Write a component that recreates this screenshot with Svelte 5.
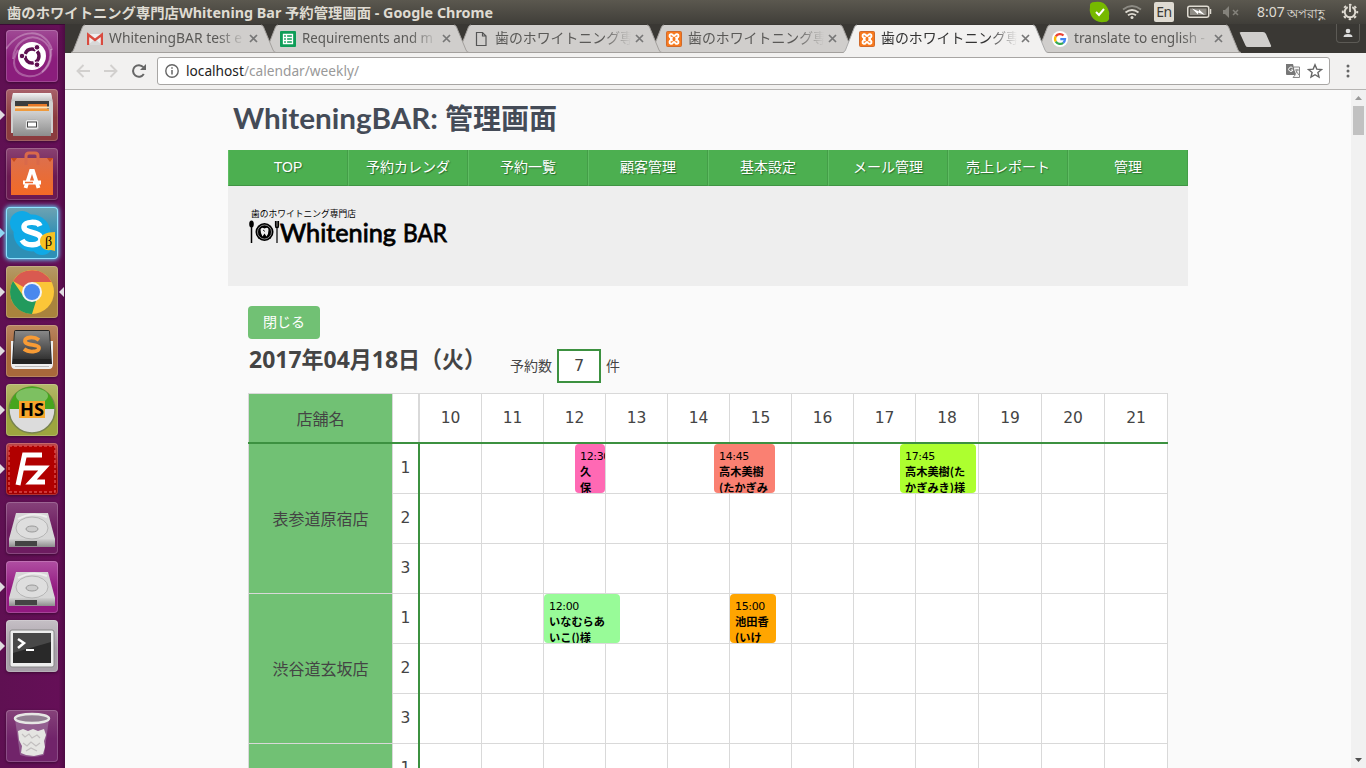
<script>
  const tabs = [
    { icon: 'gmail', title: 'WhiteningBAR test e', len: 133 },
    { icon: 'sheet', title: 'Requirements and m', len: 131 },
    { icon: 'file', title: '歯のホワイトニング専', len: 139 },
    { icon: 'xampp', title: '歯のホワイトニング専', len: 139 },
    { icon: 'xampp', title: '歯のホワイトニング専', len: 139, active: true },
    { icon: 'google', title: 'translate to english -', len: 131 }
  ];
  const launcher = [
    { icon: 'ubuntu', a: '#a04a95', b: '#8b1d7c' },
    { icon: 'files', a: '#a8616a', b: '#8b3b3e', run: true },
    { icon: 'software', a: '#8a4272', b: '#6b1a52' },
    { icon: 'skype', a: '#6fa3b2', b: '#2e8fb5', run: true, glow: true },
    { icon: 'chrome', a: '#b59a67', b: '#a9833d', run: true, focus: true },
    { icon: 'sublime', a: '#b98560', b: '#a8683b', run: true },
    { icon: 'heidi', a: '#b5b86a', b: '#9da53f', run: true },
    { icon: 'filezilla', a: '#b9474a', b: '#a00000', run: true },
    { icon: 'disk', a: '#86427a', b: '#6d1c60' },
    { icon: 'disk', a: '#b04fa2', b: '#921980', run: true },
    { icon: 'terminal', a: '#c5bfc5', b: '#a79fa8', run: true },
    { icon: 'trash', a: '#86427a', b: '#71246a', last: true }
  ];
  const nav = ['TOP', '予約カレンダ', '予約一覧', '顧客管理', '基本設定', 'メール管理', '売上レポート', '管理'];
  const hours = [10, 11, 12, 13, 14, 15, 16, 17, 18, 19, 20, 21];
  const stores = [
    {
      name: '表参道原宿店',
      events: [
        { left: 326, width: 30, color: '#ff69b4', time: '12:30', lines: ['久', '保'] },
        { left: 465, width: 61, color: '#fa8072', time: '14:45', lines: ['高木美樹', '(たかぎみ'] },
        { left: 651, width: 76, color: '#adff2f', time: '17:45', lines: ['高木美樹(た', 'かぎみき)様'] }
      ]
    },
    {
      name: '渋谷道玄坂店',
      events: [
        { left: 295, width: 76, color: '#98fb98', time: '12:00', lines: ['いなむらあ', 'いこ()様'] },
        { left: 481, width: 46, color: '#ffa500', time: '15:00', lines: ['池田香', '(いけ'] }
      ]
    },
    { name: '', events: [] }
  ];
</script>

{#snippet favicon(name)}
  <svg class="favicon" width="16" height="16" viewBox="0 0 16 16">
    {#if name === 'gmail'}
      <path d="M1 3h14v11H1z" fill="#eee" />
      <path d="M1 14h14L8 8z" fill="#d8d8d8" />
      <path d="M1 14V3.500L8 9l7-5.500V14" fill="none" stroke="#d94b3f" stroke-width="2.400" />
    {:else if name === 'sheet'}
      <rect width="16" height="16" rx="1" fill="#0f9d58" />
      <path d="M3.500 3.500h9v9h-9zM3.500 6.500h9M3.500 9.500h9M6.500 3.500v9" fill="none" stroke="#fff" stroke-width="1.300" />
    {:else if name === 'file'}
      <path d="M3.500 1.500h6l3.500 3.500v9.500H3.500zM9.500 1.500V5H13" fill="none" stroke="#555" stroke-width="1.200" />
    {:else if name === 'xampp'}
      <rect x=".5" y=".5" width="15" height="15" rx="1" fill="#f8791d" stroke="#cf6a2c" />
      <g fill="none" stroke="#fff" stroke-width="1.900">
        <path d="M6.800 6.800H5.200a1.800 1.800 0 1 1 1.700-2.600l1.100.9 1.100-.9a1.800 1.800 0 1 1 1.700 2.600H9.200" />
        <path d="M6.800 9.200H5.200a1.800 1.800 0 1 0 1.700 2.600l1.100-.9 1.100.9a1.800 1.800 0 1 0 1.700-2.600H9.200" />
        <path d="M5 6.500v3M11 6.500v3" />
      </g>
    {:else}
      <circle cx="8" cy="8" r="8" fill="#fff" />
      <g fill="none" stroke-width="2.300">
        <path d="M3.800 5.400A5 5 0 0 1 11.500 4.500" stroke="#ea4335" />
        <path d="M3.800 5.400a5 5 0 0 0 0 5.200" stroke="#fbbc05" />
        <path d="M3.800 10.600A5 5 0 0 0 11.200 11.800" stroke="#34a853" />
        <path d="M11.200 11.800A5 5 0 0 0 13 8.200H8.300" stroke="#4285f4" />
      </g>
    {/if}
  </svg>
{/snippet}

{#snippet appIcon(name)}
  <svg width="52" height="52" viewBox="0 0 52 52">
    {#if name === 'ubuntu'}
      <g fill="none" stroke="#fff" stroke-opacity=".28" stroke-width="2">
        <path d="M7 29C8 11 24 3 36 10s10 23 0 32" /><path d="M45 19c2 17-10 29-24 27S5 31 12 20" /><path d="M0 19C13-1 39-3 46 20" />
      </g>
      <circle cx="26" cy="26" r="14" fill="#fff" />
      <circle cx="26" cy="26" r="7" fill="none" stroke="#5e0f50" stroke-width="3.400" stroke-dasharray="12.900 1.760" stroke-dashoffset="5.500" />
      <g fill="#5e0f50" stroke="#fff"><circle cx="16" cy="26" r="2.800" /><circle cx="31" cy="17.300" r="2.800" /><circle cx="31" cy="34.700" r="2.800" /></g>
    {:else if name === 'files'}
      <path d="M7 4h38l2 10v30H5V14z" fill="#d0d0d0" /><path d="M7 4h38l1.500 8h-41z" fill="url(#lid)" /><path d="M9 12h34v13H9z" fill="#3c3c3c" />
      <path d="M9 17h13v-2h19v6H9z" fill="#e87a28" /><path d="M9 17.500h34v2H9z" fill="#fbe3b5" /><path d="M9 20h34v3H9z" fill="#ef9a3c" />
      <path d="M7 22h38v25H7z" fill="url(#metal)" />
      <rect x="19.500" y="30.500" width="13" height="10" rx="2" fill="#e8e8e8" stroke="#b5b5b5" /><rect x="21.500" y="33" width="9" height="5" fill="#fff" stroke="#444" />
    {:else if name === 'software'}
      <path d="M5 10h42v37H5z" fill="url(#orange)" /><path d="M5 10l3 4 3-4M41 10l3 4 3-4" fill="#c94b1d" />
      <path d="M20 17V8q0-3 3-3h6q3 0 3 3v9" fill="none" stroke="#d9694a" stroke-width="3" />
      <path d="M19.500 40l5.500-17h2l5.500 17M17 34.500h18" fill="none" stroke="#fff" stroke-width="3.800" /><path d="M19 34.500h8" stroke="#ee6930" stroke-width="1.500" />
    {:else if name === 'skype'}
      <circle cx="26" cy="26" r="18.500" fill="#0fa9e6" /><circle cx="16" cy="16" r="12" fill="#0fa9e6" /><circle cx="36" cy="37" r="11" fill="#0fa9e6" />
      <path d="M34 19c-2-5-16-5-16 1 0 7 17 4 17 12 0 7-15 8-19 1" fill="none" stroke="#fff" stroke-width="5.500" />
      <path d="M49 25v19l-4-1c-7 1-11-3-11-9s6-9 15-9z" fill="#f6c224" />
      <text x="39" y="39" font-family="Liberation Serif, serif" font-size="14">β</text>
    {:else if name === 'chrome'}
      <circle cx="26" cy="26" r="22" fill="#fbc638" />
      <path d="M26 26L7 15A22 22 0 0 1 45.500 16H26z" fill="#d95a50" /><path d="M7 15l11 16 12 4-4 13A22 22 0 0 1 7 15z" fill="#229a5d" />
      <circle cx="26" cy="26" r="10" fill="#f4f4f4" /><circle cx="26" cy="26" r="8" fill="#4a88ee" />
    {:else if name === 'sublime'}
      <path d="M5 16h42v23q0 5-4 5H9q-4 0-4-5z" fill="#eee" /><path d="M9 41.500h34" stroke="#bbb" /><path d="M8 7q0-2 2-2h32q2 0 2 2l2 32H6z" fill="#222" />
      <path d="M9 6h34l2 28H7z" fill="url(#dark)" /><path d="M33 15c-5-4-14-3-14 1 0 5 14 3 14 7 0 4-10 5-15 1" fill="none" stroke="#f79b35" stroke-width="3.800" />
    {:else if name === 'heidi'}
      <circle cx="26" cy="26" r="23" fill="#dcdcdc" stroke="#78834f" stroke-width="1.500" /><path d="M3.500 25a22.500 22.500 0 0 1 45 0z" fill="#46a51e" /><ellipse cx="26" cy="12" rx="16" ry="8" fill="#fff" opacity=".3" />
      <rect x="13" y="17" width="26" height="17" fill="#f6a62b" /><text x="26" y="31.500" text-anchor="middle" font-family="Noto Sans, sans-serif" font-weight="700" font-size="17" textLength="24" lengthAdjust="spacingAndGlyphs">HS</text>
    {:else if name === 'filezilla'}
      <rect x="3" y="3" width="46" height="46" fill="#b10000" stroke="#d94a4a" stroke-width="1.500" stroke-dasharray="3 2" />
      <path d="M12 42l6.500-30H36M16 25h13M26 25h12L25 39h14" fill="none" stroke="#fff" stroke-width="5" />
    {:else if name === 'disk'}
      <path d="M10 11h32l7 26H3z" fill="#d7d7d7" /><path d="M3 37h46v8H3z" fill="url(#metal)" /><path d="M9 39h22v5H9z" fill="#444" />
      <ellipse cx="26" cy="26" rx="16" ry="11" fill="#dedede" stroke="#b5b5b5" /><ellipse cx="26" cy="27" rx="6" ry="3" fill="#ccc" stroke="#999" /><path d="M12 17q14-8 29-2" fill="none" stroke="#eee" stroke-width="2" />
    {:else if name === 'terminal'}
      <rect x="4" y="10" width="44" height="37" rx="2" fill="#eee" stroke="#888" /><rect x="7" y="13" width="38" height="30" fill="#292929" /><path d="M7 13h38v9L7 33z" fill="#484848" />
      <path d="M12 19l6 4-6 5" fill="none" stroke="#fff" stroke-width="2.500" /><path d="M20 30h8" stroke="#fff" stroke-width="2" />
    {:else}
      <path d="M9 9l5 36q12 4 24 0l5-36" fill="#a077a0" opacity=".65" />
      <path d="M12 21l5-2 5 2 5-2 5 2 6-2 2 6-2 6 1 6-2 7-9 2-8-1-5-2 1-7-3-6z" fill="#e5e5e2" /><path d="M16 24l3 3 4-3 3 4 5-3 3 3M17 33l4 3 4-4 5 4 4-3M20 41l5-3 6 3" fill="none" stroke="#c2bfbf" stroke-width="1.200" />
      <ellipse cx="26" cy="8.500" rx="17" ry="4.500" fill="#938093" stroke="#e7e7e5" stroke-width="2.500" />
    {/if}
  </svg>
{/snippet}

<svg class="defs" width="0" height="0">
  <defs>
    <linearGradient id="metal" x2="0" y2="1"><stop stop-color="#d2d2d2" /><stop offset="1" stop-color="#8d8d8d" /></linearGradient>
    <linearGradient id="lid" x2="0" y2="1"><stop stop-color="#f4f4f4" /><stop offset="1" stop-color="#c2c2c2" /></linearGradient>
    <linearGradient id="orange" x2="0" y2="1"><stop stop-color="#dd6f4c" /><stop offset="1" stop-color="#f26a26" /></linearGradient>
    <linearGradient id="dark" x2="0" y2="1"><stop stop-color="#888" /><stop offset="1" stop-color="#333" /></linearGradient>
  </defs>
</svg>

<div class="desktop">
  <header class="panel">
    <svg class="win-title" width="490" height="24">
      <text x="7" y="18" textLength="486" lengthAdjust="spacingAndGlyphs">歯のホワイトニング専門店Whitening Bar 予約管理画面 - Google Chrome</text>
    </svg>
    <div class="tray">
      <svg width="22" height="22" viewBox="0 0 22 22"><path d="M1 6Q0 1 6 1q9-1 12 5 3 5 2 9 1 6-5 6-8 1-12-5Q0 11 1 6z" fill="#76b900" /><path d="M7 11l3 3 5-6" fill="none" stroke="#fff" stroke-width="2" /></svg>
      <svg class="wifi" width="20" height="16" viewBox="0 0 20 16" fill="none" stroke-width="1.800"><path d="M1 5.500q9-7 18 0" stroke="#8d8b84" /><path d="M3.500 8.500q6.500-5 13 0M6 11.300q4-3 8 0" stroke="#dfdbd2" /><circle cx="10" cy="13.500" r="1.500" fill="#dfdbd2" /></svg>
      <span class="lang">En</span>
      <svg class="battery" width="25" height="14" viewBox="0 0 25 14"><rect x=".75" y="1.250" width="21" height="11" rx="2" fill="none" stroke="#dfdbd2" stroke-width="1.500" /><rect x="3" y="3.500" width="16.500" height="6.500" fill="#8f8c85" /><path d="M23.500 4v5" stroke="#dfdbd2" stroke-width="1.500" /><path d="M5 3.500l7 3V4.500l6 5.500-7-2.500v2z" fill="#fff" /></svg>
      <svg class="mute" width="18" height="12" viewBox="0 0 18 12"><path d="M1 4h2l4-4v12L3 8H1z" fill="#84827b" /><path d="M11 4l5 5M16 4l-5 5" stroke="#84827b" stroke-width="1.500" /></svg>
      <div class="clock"><span>8:07</span><span class="ampm">অপরাহ্ণ</span></div>
      <svg class="gear" width="18" height="18" viewBox="0 0 18 18" fill="none" stroke="#dfdbd2"><circle cx="9" cy="9" r="7.200" stroke-width="2" stroke-dasharray="2.500 3.155" stroke-dashoffset="1.250" /><path d="M6.700 4.200a5.300 5.300 0 1 0 4.600 0" stroke-width="2" /><path d="M9 2.500V9" stroke-width="1.800" /></svg>
    </div>
  </header>

  <div class="below">
    <aside class="launcher">
      {#each launcher as app}
        <div class="app" class:run={app.run} class:focus={app.focus} class:glow={app.glow} class:last={app.last} style="--a:{app.a};--b:{app.b}">
          {@render appIcon(app.icon)}
        </div>
      {/each}
    </aside>

    <main class="browser">
      <div class="tabstrip">
        {#each tabs as tab, i}
          <div class="tab" class:active={tab.active} style="z-index:{tab.active ? 20 : 10 - i}">
            <svg class="shape" width="206" height="29" viewBox="0 0 206 29">
              <path class="fill" d="M0 29Q1.500 28.500 2.500 26L11.500 3Q12.500 1 14 1H190Q191.500 1 192.500 3L202 26Q203 28.500 205 29z" />
              <path class="edge" d="M0 28.500Q1.500 28 2.500 26L11.500 3Q12.500 1 14 1M190 1Q191.500 1 192.500 3L202 26Q203 28.500 205 28.500" />
              {#if !tab.active}<path d="M1 28.500h203" stroke="#a3a09d" />{/if}
            </svg>
            <div class="tab-body">
              {@render favicon(tab.icon)}
              <svg class="tab-title" width="140" height="24"><text x="0" y="15.500" textLength={tab.len} lengthAdjust="spacingAndGlyphs">{tab.title}</text></svg>
              <svg class="close" width="9" height="9" viewBox="0 0 9 9"><path d="M1 1l7 7M8 1L1 8" stroke="#777" stroke-width="1.700" /></svg>
            </div>
          </div>
        {/each}
        <svg class="newtab" width="34" height="17" viewBox="0 0 34 17"><path d="M1 1.500Q0 0 2 0H24Q26 0 27 2L32 13.500Q32.500 15 31 15H9Q7 15 6.500 13.500z" fill="#d0cecc" /></svg>
        <div class="user"><svg width="10" height="10" viewBox="0 0 10 10"><circle cx="5" cy="3" r="2.300" fill="#ddd" /><path d="M.5 9q0-3 4.500-3t4.500 3z" fill="#ddd" /></svg></div>
      </div>

      <div class="toolbar">
        <svg width="14" height="14" viewBox="0 0 14 14" fill="none" stroke="#d2d0ce" stroke-width="1.900"><path d="M14 7H2M7.500 1L1.500 7l6 6" /></svg>
        <svg width="14" height="14" viewBox="0 0 14 14" fill="none" stroke="#d2d0ce" stroke-width="1.900"><path d="M0 7h12M6.500 1l6 6-6 6" /></svg>
        <svg width="14" height="14" viewBox="0 0 14 14"><path d="M11.800 10A5.800 5.800 0 1 1 11.300 3.200" fill="none" stroke="#666" stroke-width="2" /><path d="M14 0v6H8z" fill="#666" /></svg>
        <div class="omnibox">
          <svg width="14" height="14" viewBox="0 0 14 14"><circle cx="7" cy="7" r="6.200" fill="none" stroke="#666" stroke-width="1.400" /><path d="M7 6v4.500M7 3.300v1.500" stroke="#666" stroke-width="1.500" /></svg>
          <svg class="url" width="180" height="24"><text y="17" textLength="173" lengthAdjust="spacingAndGlyphs">localhost<tspan fill="#999">/calendar/weekly/</tspan></text></svg>
          <svg class="translate" width="14" height="14" viewBox="0 0 14 14"><path d="M0 0h7l3 11H1Q0 11 0 10z" fill="#777" /><path d="M8 3h5.500v10.500H7l2.500-3" fill="#f4f4f4" stroke="#888" /><path d="M9 6h4M11 5v1q0 2-2 4M10 7l3 4" fill="none" stroke="#888" /><path d="M6.700 4A2.200 2.200 0 1 0 7 6H5" fill="none" stroke="#fff" /></svg>
          <svg width="16" height="16" viewBox="0 0 16 16"><path d="M8 1.800l1.800 4.300 4.700.4-3.600 3 1.100 4.600L8 11.700l-4 2.400 1.100-4.600-3.600-3 4.700-.4z" fill="none" stroke="#666" stroke-width="1.400" /></svg>
        </div>
        <svg class="menu" width="4" height="14" viewBox="0 0 4 14" fill="#666"><circle cx="2" cy="2" r="1.500" /><circle cx="2" cy="7" r="1.500" /><circle cx="2" cy="12" r="1.500" /></svg>
      </div>

      <div class="viewport">
        <div class="page">
          <svg class="site-title" width="400" height="60">
            <text x="5" y="39" textLength="205" lengthAdjust="spacingAndGlyphs">WhiteningBAR:</text>
            <text class="jp" x="217" y="39" textLength="112" lengthAdjust="spacingAndGlyphs">管理画面</text>
          </svg>
          <nav>
            {#each nav as item}<a href="#top">{item}</a>{/each}
          </nav>
          <div class="banner">
            <svg width="206" height="48" viewBox="0 0 206 48">
              <text class="tagline" x="3" y="11.500" textLength="105" lengthAdjust="spacingAndGlyphs">歯のホワイトニング専門店</text>
              <ellipse cx="3.500" cy="19" rx="2.300" ry="3.500" /><path d="M3.500 20v18" stroke="#000" stroke-width="1.500" />
              <circle cx="16.500" cy="27" r="9" /><circle cx="16.500" cy="27" r="7" fill="none" stroke="#ddd" stroke-width=".6" />
              <path d="M12.500 24.500q1-3 4-1 4-2 4 1.500 0 4-2 6.500l-2-3-2 3q-2-3-2-7z" fill="#eee" /><path d="M15 25l2 1.500" stroke="#000" stroke-width=".8" />
              <path d="M27.500 16v5q0 2 1.500 2t1.500-2v-5M29 16v22" fill="none" stroke="#000" stroke-width="1.200" />
              <text class="brand" x="32" y="37" textLength="116" lengthAdjust="spacingAndGlyphs">Whitening</text>
              <text class="brand" x="155" y="37" textLength="44" lengthAdjust="spacingAndGlyphs">BAR</text>
            </svg>
          </div>
          <section class="content">
            <button>閉じる</button>
            <div class="dateline">
              <svg class="date" width="240" height="36"><text x="1" y="28.500" textLength="237" lengthAdjust="spacingAndGlyphs"><tspan class="digits">2017</tspan>年<tspan class="digits">04</tspan>月<tspan class="digits">18</tspan>日（火）</text></svg>
              <div class="count"><span>予約数</span><b>7</b><span>件</span></div>
            </div>
            <div class="calendar">
              <div class="row head">
                <div class="store">店舗名</div>
                <div class="num"></div>
                {#each hours as h}<div class="cell">{h}</div>{/each}
              </div>
              {#each stores as store}
                <div class="group">
                  <div class="store">{store.name}</div>
                  <div class="lanes">
                    {#each [1, 2, 3] as n}
                      <div class="lane">
                        <div class="num">{n}</div>
                        {#each hours as h}<div class="cell"></div>{/each}
                      </div>
                    {/each}
                  </div>
                  {#each store.events as e}
                    <div class="event" style="left:{e.left + 1}px;width:{e.width}px;background:{e.color}">
                      <div class="time">{e.time}</div>
                      {#each e.lines as l}<div class="who">{l}</div>{/each}
                    </div>
                  {/each}
                </div>
              {/each}
            </div>
          </section>
        </div>
        <div class="scrollbar">
          <svg width="7" height="4" viewBox="0 0 7 4"><path d="M0 4l3.500-4L7 4z" fill="#999" /></svg>
          <div class="thumb"></div>
          <svg class="down" width="7" height="4" viewBox="0 0 7 4"><path d="M0 0h7L3.500 4z" fill="#505050" /></svg>
        </div>
      </div>
    </main>
  </div>
</div>

<style>
  :global(body) { margin: 0; overflow: hidden; }
  * { box-sizing: border-box; }
  svg { display: block; flex: none; }
  .defs { position: absolute; }
  .desktop { width: 1366px; height: 768px; overflow: hidden; display: flex; flex-direction: column; font-family: "Noto Sans", "Noto Sans CJK JP", sans-serif; }
  .panel { height: 24px; flex: none; display: flex; justify-content: space-between; background: linear-gradient(#5b584f, #403e39); color: #dfdbd2; }
  .win-title { overflow: visible; }
  .win-title text { font: 700 14px "Noto Sans", "Noto Sans CJK JP", sans-serif; fill: #dfdbd2; }
  .tray { display: flex; align-items: center; padding-right: 7px; }
  .wifi { margin-left: 11px; }
  .lang { margin-left: 12px; width: 20px; height: 20px; border-radius: 2px; background: #dfdbd2; color: #3c3b37; font-size: 14px; line-height: 20px; text-align: center; letter-spacing: -.5px; }
  .battery { margin-left: 13px; }
  .mute { margin-left: 10px; }
  .clock { margin-left: 17px; width: 72px; height: 24px; font-size: 14px; line-height: 24px; white-space: nowrap; display: flex; gap: 2px; }
  .ampm { font-size: 13px; line-height: 26px; }
  .gear { margin-left: 12px; }

  .below { flex: 1; display: flex; min-height: 0; }
  .launcher { width: 65px; flex: none; background: linear-gradient(90deg, #5f1052, #650f57 90%, #4d0b43); border-top: 1px solid #3c0935; padding: 5px 0 6px 6px; display: flex; flex-direction: column; gap: 7px; }
  .app { position: relative; width: 52px; height: 52px; flex: none; border-radius: 4px; background: linear-gradient(var(--a), var(--b) 55%); box-shadow: inset 0 0 0 1px #ffffff30, 0 1px 3px #0006; }
  .app.glow { box-shadow: 0 0 4px 1px #61cdf2, inset 0 0 0 1px #8fe2ff; }
  .app.last { margin-top: auto; }
  .app.run::before { content: ""; position: absolute; left: -6px; top: 21px; border: 5px solid transparent; border-left-color: #e0dce0; border-right: 0; }
  .app.glow::before { border-left-color: #8fd6f2; }
  .app.focus::after { content: ""; position: absolute; right: -6px; top: 21px; border: 5px solid transparent; border-right-color: #e0dce0; border-left: 0; }

  .browser { flex: 1; min-width: 0; display: flex; flex-direction: column; }
  .tabstrip { height: 29px; flex: none; background: #3a3834; display: flex; padding-left: 6px; }
  .tab { position: relative; width: 206px; height: 29px; margin-right: -13px; flex: none; }
  .shape { position: absolute; inset: 0; }
  .fill { fill: #d0cecc; }
  .active .fill { fill: #f2f1f0; }
  .edge { fill: none; stroke: #a3a09d; }
  .active .edge { stroke: #aaa; }
  .tab-body { position: relative; height: 29px; display: flex; align-items: center; padding-left: 16px; }
  .tab-title { margin-left: 6px; -webkit-mask-image: linear-gradient(90deg, #000 108px, transparent 136px); mask-image: linear-gradient(90deg, #000 108px, transparent 136px); }
  .tab-title text { font-size: 14px; fill: #5a5957; }
  .active .tab-title text { fill: #333; }
  .close { margin-left: 0; }
  .newtab { margin: 8px 0 0 10px; }
  .user { margin: 0 6px 0 auto; width: 24px; height: 19px; border: 1px solid #5c5a55; border-top: 0; border-radius: 0 0 4px 4px; display: flex; align-items: center; justify-content: center; }

  .toolbar { height: 37px; flex: none; background: #f2f1f0; border-bottom: 1px solid #b6b4b2; display: flex; align-items: center; gap: 14px; padding-left: 11px; }
  .omnibox { margin-left: -3px; width: 1173px; height: 28px; border: 1px solid #a8a6a4; border-radius: 3px; background: #fff; display: flex; align-items: center; padding: 0 6px 0 7px; }
  .url { margin-left: 7px; }
  .url text { font-size: 15px; fill: #222; }
  .translate { margin-left: auto; margin-right: 7px; }
  .menu { margin-left: 2px; }

  .viewport { flex: 1; min-height: 0; display: flex; background: #fafafa; overflow: hidden; }
  .page { width: 960px; margin-left: 163px; color: #444; flex: none; font-family: "DejaVu Sans", "Noto Sans CJK JP", sans-serif; }
  .site-title text { font: 700 29px Lato, sans-serif; fill: #444b57; }
  .site-title .jp { font: 700 28px "Noto Sans CJK JP", sans-serif; }
  nav { display: grid; grid-template-columns: repeat(8, 120px); height: 36px; }
  nav a { background: #4caf50; border-left: 1px solid #5fbd63; border-right: 1px solid #449d48; border-bottom: 1px solid #409444; color: #fff; font-family: "Liberation Sans", "Noto Sans CJK JP", sans-serif; font-size: 14px; line-height: 35px; text-align: center; text-decoration: none; text-shadow: 1px 1px 1px #2b6e2e; }
  .banner { height: 100px; background: #eee; padding: 19px 0 0 20px; }
  .tagline { font: 400 9px "Noto Sans CJK JP", sans-serif; }
  .brand { font: 400 25px Lato, sans-serif; stroke: #000; stroke-width: .8; }
  .content { padding: 20px; }
  button { display: block; width: 72px; height: 33px; border: 0; padding: 0 0 3px; border-radius: 4px; background: #71c174; color: #fff; font: 14px/30px "Noto Sans CJK JP", sans-serif; }
  .dateline { display: flex; height: 54px; }
  .date text { font: 700 23px "Noto Sans", "Noto Sans CJK JP", sans-serif; fill: #444; }
  .date .digits { font-size: 24px; }
  .count { display: flex; align-items: center; gap: 5px; height: 34px; margin: 10px 0 0 22px; font-size: 14px; }
  .count span { padding-bottom: 3px; }
  .count b { width: 44px; height: 34px; border: 2px solid #3c9140; background: #fff; font-weight: 400; font-size: 16px; line-height: 29px; text-align: center; }
  .calendar { width: 920px; border-top: 1px solid #d9d9d9; font-size: 15px; }
  .row { display: grid; grid-template-columns: 145px 27px repeat(8, 62px) repeat(4, 63px); height: 50px; border-bottom: 2px solid #3c9140; }
  .store { background: #71c174; border-left: 1px solid #d9d9d9; border-right: 1px solid #d9d9d9; display: flex; align-items: center; justify-content: center; font-size: 16px; }
  .num { background: #fff; border-right: 2px solid #3c9140; display: flex; align-items: center; justify-content: center; padding-bottom: 2px; font-size: 15.500px; }
  .head .num { border-color: #d9d9d9; }
  .cell { background: #fff; border-right: 1px solid #d9d9d9; display: flex; align-items: center; justify-content: center; font-size: 15.500px; }
  .group { position: relative; display: grid; grid-template-columns: 145px 775px; height: 150px; }
  .group .store { border-bottom: 1px solid #d9d9d9; padding-bottom: 2px; }
  .lane { display: grid; grid-template-columns: 27px repeat(8, 62px) repeat(4, 63px); height: 50px; }
  .lane > .cell { border-bottom: 1px solid #d9d9d9; }
  .num { box-shadow: inset 0 -1px #d9d9d9; }
  .head .num { box-shadow: none; }
  .event { position: absolute; top: 0; height: 49px; padding: 5px 0 0 5px; border-radius: 4px; overflow: hidden; color: #000; font-size: 11px; line-height: 16px; white-space: nowrap; }
  .time { height: 14px; letter-spacing: -.35px; }
  .who { font-family: "Noto Sans CJK JP", sans-serif; font-weight: 700; font-size: 11.200px; }
  .scrollbar { width: 15px; margin-left: auto; background: #f1f1f1; display: flex; flex-direction: column; align-items: center; padding: 6px 0; }
  .thumb { width: 11px; height: 29px; background: #c1c1c1; margin-top: 6px; }
  .down { margin-top: auto; }
</style>
